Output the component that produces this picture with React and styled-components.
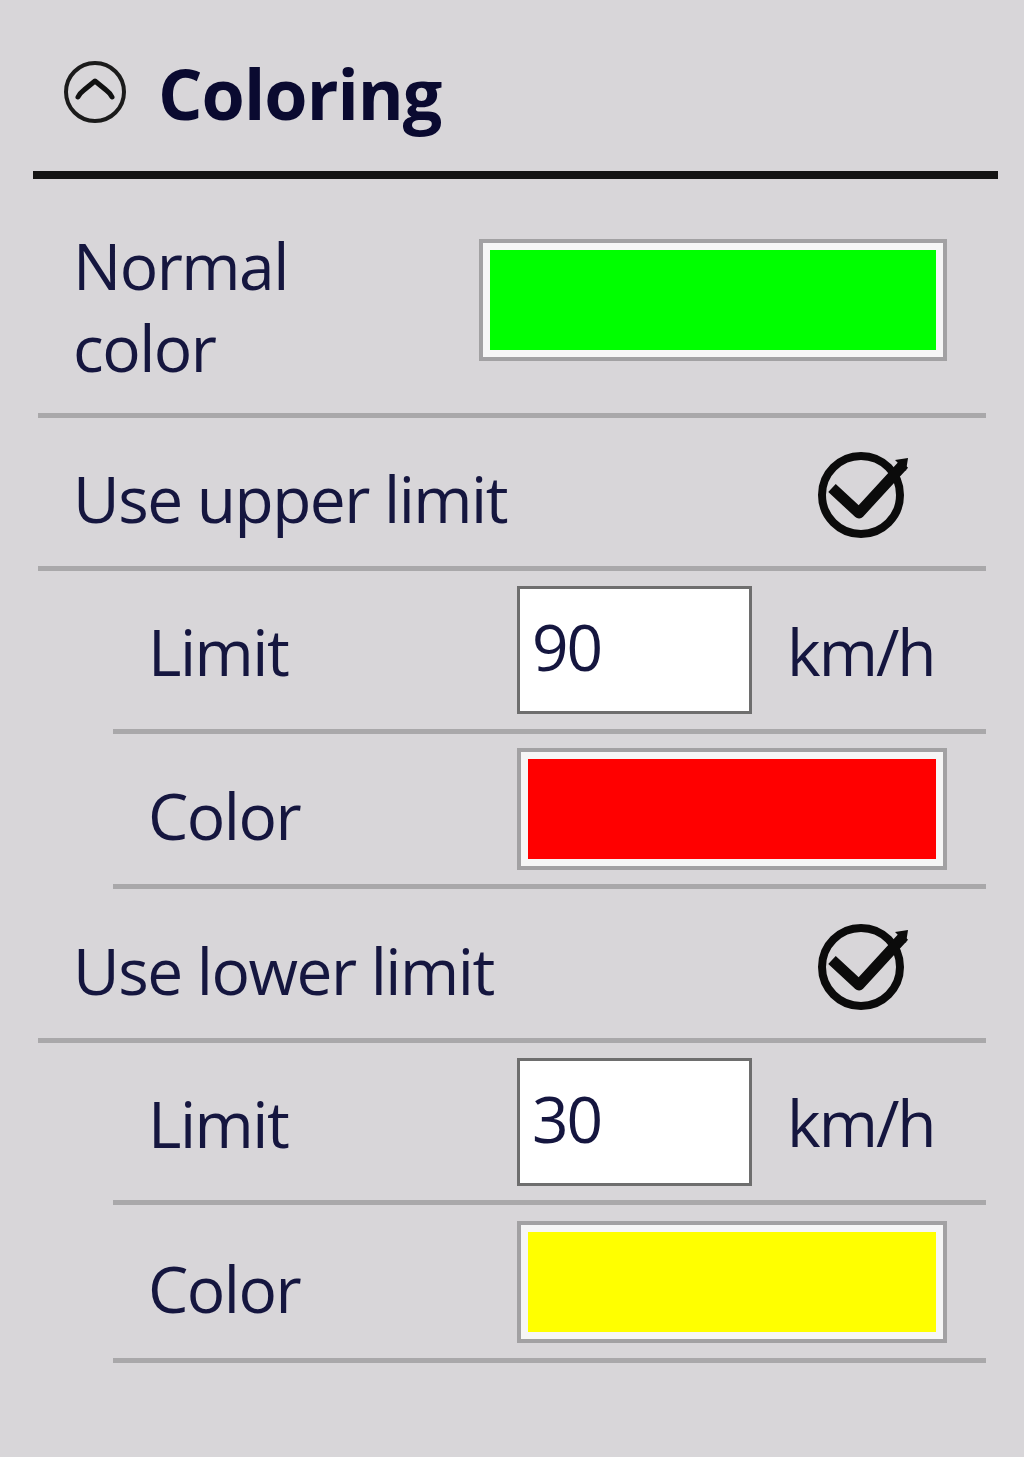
import React from 'react';
import styled, { createGlobalStyle } from 'styled-components';

const GlobalStyle = createGlobalStyle`
  html, body {
    margin: 0;
    padding: 0;
    background: #d8d6d9;
  }
  body {
    font-family: "Open Sans", "Noto Sans", sans-serif;
    color: #15163f;
  }
`;

const Panel = styled.div`
  width: 1024px;
  height: 1457px;
  background: #d8d6d9;
  overflow: hidden;
`;

const Header = styled.div`
  display: flex;
  align-items: center;
  gap: 30px;
  height: 179px;
  margin: 0 26px 0 33px;
  padding: 12px 0 0 29px;
  box-sizing: border-box;
  border-bottom: 8px solid #141414;
`;

const Title = styled.div`
  font-size: 70px;
  font-weight: 700;
  color: #0a0a30;
  letter-spacing: -1px;
  margin-top: 2px;
`;

const List = styled.div`
  display: flex;
  flex-direction: column;
  margin: 0 38px;
`;

const Row = styled.div`
  display: grid;
  grid-template-columns: ${p => p.$labelWidth}px 1fr;
  align-items: center;
  height: ${p => p.$height}px;
  margin-left: ${p => (p.$sub ? 75 : 0)}px;
  border-bottom: 5px solid #a9a8aa;
  box-sizing: content-box;
  padding-right: 39px;
`;

const Label = styled.div`
  padding-left: 35px;
  padding-top: ${p => p.$drop ?? 14}px;
  font-size: 64px;
  line-height: 82px;
  letter-spacing: -1.5px;
  color: #15163f;
`;

const Swatch = styled.div`
  height: 122px;
  box-sizing: border-box;
  border: 4px solid #a2a1a3;
  padding: 7px;
  background: #f6f6f6;
  margin-top: ${p => p.$drop ?? 0}px;
  &::after {
    content: '';
    display: block;
    height: 100%;
    background: ${p => p.$color};
  }
`;

const Check = styled.div`
  justify-self: end;
  margin-right: 36px;
  margin-top: 6px;
  display: flex;
`;

const LimitWrap = styled.div`
  display: flex;
  align-items: center;
  gap: 35px;
`;

const NumberBox = styled.div`
  width: 235px;
  height: 128px;
  box-sizing: border-box;
  border: 3px solid #6e6e6e;
  background: #fff;
  padding: 8px 12px;
  font-size: 64px;
  line-height: 100px;
  letter-spacing: -2px;
  color: #15163f;
`;

const Unit = styled.div`
  font-size: 64px;
  letter-spacing: -2px;
  color: #15163f;
  margin-top: 2px;
`;

function CollapseIcon() {
  return (
    <svg width="66" height="66" viewBox="0 0 66 66">
      <circle cx="33" cy="33" r="29" fill="none" stroke="#1b1b1b" strokeWidth="4" />
      <path d="M16 38 Q18 34 22 31 L33 22 L44 31 Q48 34 50 38" fill="none" stroke="#111" strokeWidth="5" strokeLinecap="round" strokeLinejoin="round" />
    </svg>
  );
}

function CheckIcon() {
  return (
    <svg width="96" height="96" viewBox="0 0 96 96">
      <circle cx="46" cy="48" r="39" fill="none" stroke="#0b0b0b" strokeWidth="8" />
      <path d="M17 41 L44 66 L89 17" fill="none" stroke="#0b0b0b" strokeWidth="11" strokeLinejoin="round" />
      <path d="M80 13 L93 11 L91 24 Z" fill="#0b0b0b" />
    </svg>
  );
}

function ColorRow({ label, color, sub, height, drop, swatchDrop }) {
  return (
    <Row $sub={sub} $height={height} $labelWidth={sub ? 404 : 441}>
      <Label $drop={drop}>{label}</Label>
      <Swatch $color={color} $drop={swatchDrop} />
    </Row>
  );
}

function CheckRow({ label, height }) {
  return (
    <Row $height={height} $labelWidth={600}>
      <Label>{label}</Label>
      <Check><CheckIcon /></Check>
    </Row>
  );
}

function LimitRow({ value, height }) {
  return (
    <Row $sub $height={height} $labelWidth={404}>
      <Label $drop={4}>Limit</Label>
      <LimitWrap>
        <NumberBox>{value}</NumberBox>
        <Unit>km/h</Unit>
      </LimitWrap>
    </Row>
  );
}

export default function App() {
  return (
    <Panel>
      <GlobalStyle />
      <Header>
        <CollapseIcon />
        <Title>Coloring</Title>
      </Header>
      <List>
        <ColorRow label={<>Normal<br />color</>} color="#00ff00" height={234} drop={22} swatchDrop={8} />
        <CheckRow label="Use upper limit" height={148} />
        <LimitRow value="90" height={158} />
        <ColorRow sub label="Color" color="#ff0000" height={150} />
        <CheckRow label="Use lower limit" height={149} />
        <LimitRow value="30" height={157} />
        <ColorRow sub label="Color" color="#ffff00" height={153} />
      </List>
    </Panel>
  );
}
